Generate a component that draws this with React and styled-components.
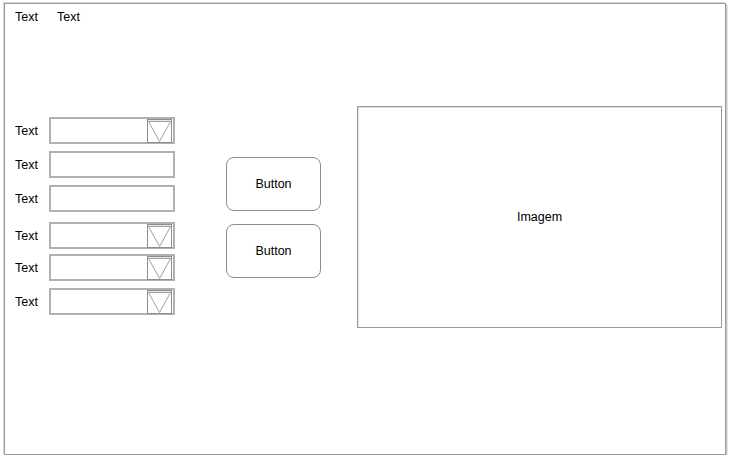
import React from "react";
import styled, { createGlobalStyle } from "styled-components";

const Global = createGlobalStyle`
  html, body { margin: 0; padding: 0; background: #ffffff; }
  body { font-family: "Liberation Sans", Arial, sans-serif; font-size: 12.5px; color: #000; }
  * { box-sizing: border-box; }
`;

const Frame = styled.div`
  margin: 3px 0 0 4px;
  width: 722px;
  height: 452px;
  border: 1px solid #9c9c9c;
  box-shadow: -1px -1px 0 #d4d4d4, 1px 1px 0 #c6c6c6, 2px 2px 0 #e4e4e4;
  background: #fff;
  display: flex;
  flex-direction: column;
`;

const Header = styled.div`
  display: flex;
  gap: 19px;
  padding: 6px 0 0 10px;
  line-height: 14px;
`;

const Main = styled.div`
  display: flex;
  align-items: flex-start;
  margin-top: 82px;
  padding-left: 10px;
`;

const FormColumn = styled.div`
  display: flex;
  flex-direction: column;
  width: 160px;
  margin-top: 11px;
`;

const Row = styled.div`
  display: flex;
  align-items: center;
  margin-top: ${(p) => p.$mt || 0}px;
`;

const Label = styled.span`
  width: 34px;
  line-height: 14px;
`;

const Field = styled.div`
  width: 126px;
  height: 27px;
  border: 2px solid #b1b1b1;
  background: #fff;
  display: flex;
  align-items: center;
  justify-content: flex-end;
  padding-right: 1px;
`;

const ButtonColumn = styled.div`
  display: flex;
  flex-direction: column;
  gap: 13px;
  margin: 51px 0 0 51px;
`;

const Button = styled.div`
  width: 95px;
  height: 54px;
  border: 1px solid #8c8c8c;
  border-radius: 8px;
  display: flex;
  align-items: center;
  justify-content: center;
  line-height: 14px;
  padding-bottom: 1px;
`;

const ImageBox = styled.div`
  width: 365px;
  height: 222px;
  margin-left: 36px;
  border: 1px solid #9a9a9a;
  box-shadow: inset 1px 1px 0 #e2e2e2;
  display: flex;
  align-items: center;
  justify-content: center;
  line-height: 14px;
`;

const Arrow = () => (
  <svg width="25" height="24" viewBox="0 0 25 24" style={{ display: "block", flexShrink: 0 }}>
    <rect x="0.5" y="0.5" width="24" height="23" fill="#fff" stroke="#8e8e8e" />
    <line x1="1" y1="2" x2="24" y2="2" stroke="#d0d0d0" />
    <polyline points="1.5,2.5 23.5,2.5 12.5,22.5 1.5,2.5" fill="none" stroke="#a0a0a0" />
  </svg>
);

const rows = [
  { mt: 0, dd: true },
  { mt: 7, dd: false },
  { mt: 7, dd: false },
  { mt: 10, dd: true },
  { mt: 5, dd: true },
  { mt: 7, dd: true },
];

export default function App() {
  return (
    <>
      <Global />
      <Frame>
        <Header>
          <span>Text</span>
          <span>Text</span>
        </Header>
        <Main>
          <FormColumn>
            {rows.map((r, i) => (
              <Row key={i} $mt={r.mt}>
                <Label>Text</Label>
                <Field>{r.dd && <Arrow />}</Field>
              </Row>
            ))}
          </FormColumn>
          <ButtonColumn>
            <Button>Button</Button>
            <Button>Button</Button>
          </ButtonColumn>
          <ImageBox>Imagem</ImageBox>
        </Main>
      </Frame>
    </>
  );
}
